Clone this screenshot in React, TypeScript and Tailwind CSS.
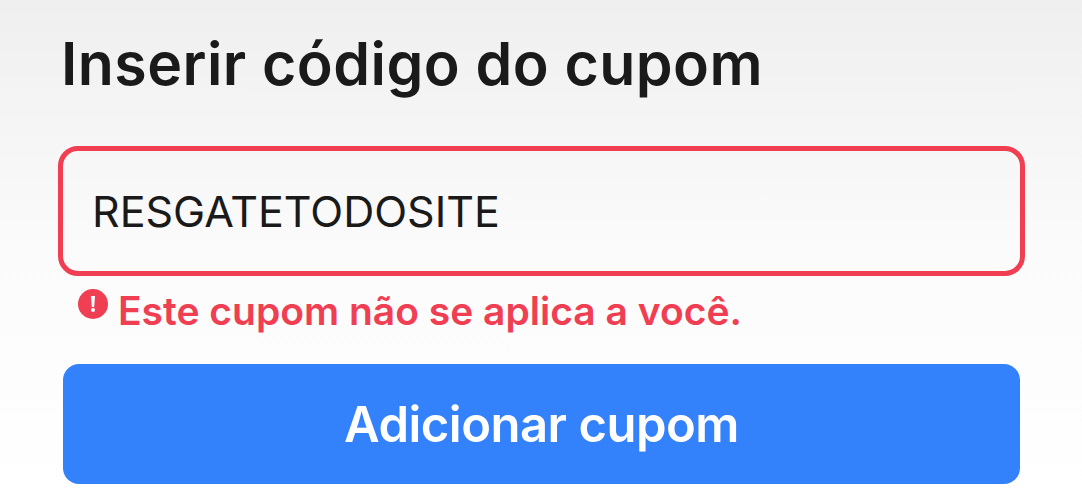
import { useState } from 'react';

export default function App() {
    const [code, setCode] = useState('RESGATETODOSITE');

    return (
        <div className="h-[500px] w-[1082px] overflow-hidden bg-linear-to-b from-[#efefef] via-[#fbfbfb] to-white pl-[58px] pt-[30px] font-['Inter',sans-serif]">
            <h1 className="h-[116px] whitespace-nowrap pl-[3px] text-[59px] font-semibold leading-[68px] tracking-[0.45px] text-[#1a1a1a]">Inserir código do cupom</h1>
            <input
                aria-label="Código do cupom"
                value={code}
                onChange={(e) => setCode(e.target.value)}
                className="block h-[130px] w-[967px] rounded-[20px] border-5 border-[#f03e52] bg-transparent px-[29px] text-[43px] text-[#1a1a1a] outline-none"
            />
            <div className="flex h-[88px] items-start pl-5 text-[#f03e52]">
                <svg className="mt-[13px] size-[30px] shrink-0" viewBox="0 0 30 30" fill="none">
                    <circle cx="15" cy="15" r="15" fill="currentColor" />
                    <path d="M13 7h4l-.8 11h-2.4z" fill="white" />
                    <circle cx="15" cy="21" r="2" fill="white" />
                </svg>
                <p className="ml-[10px] mt-[11px] whitespace-nowrap text-[39px] font-semibold leading-[48px]">Este cupom não se aplica a você.</p>
            </div>
            <button className="ml-[5px] flex h-[120px] w-[957px] items-center justify-center rounded-[16px] bg-[#3482fb] pt-0.5 text-[49px] font-semibold tracking-[-0.5px] text-white">
                <span>Adicionar cupom</span>
            </button>
        </div>
    );
}
